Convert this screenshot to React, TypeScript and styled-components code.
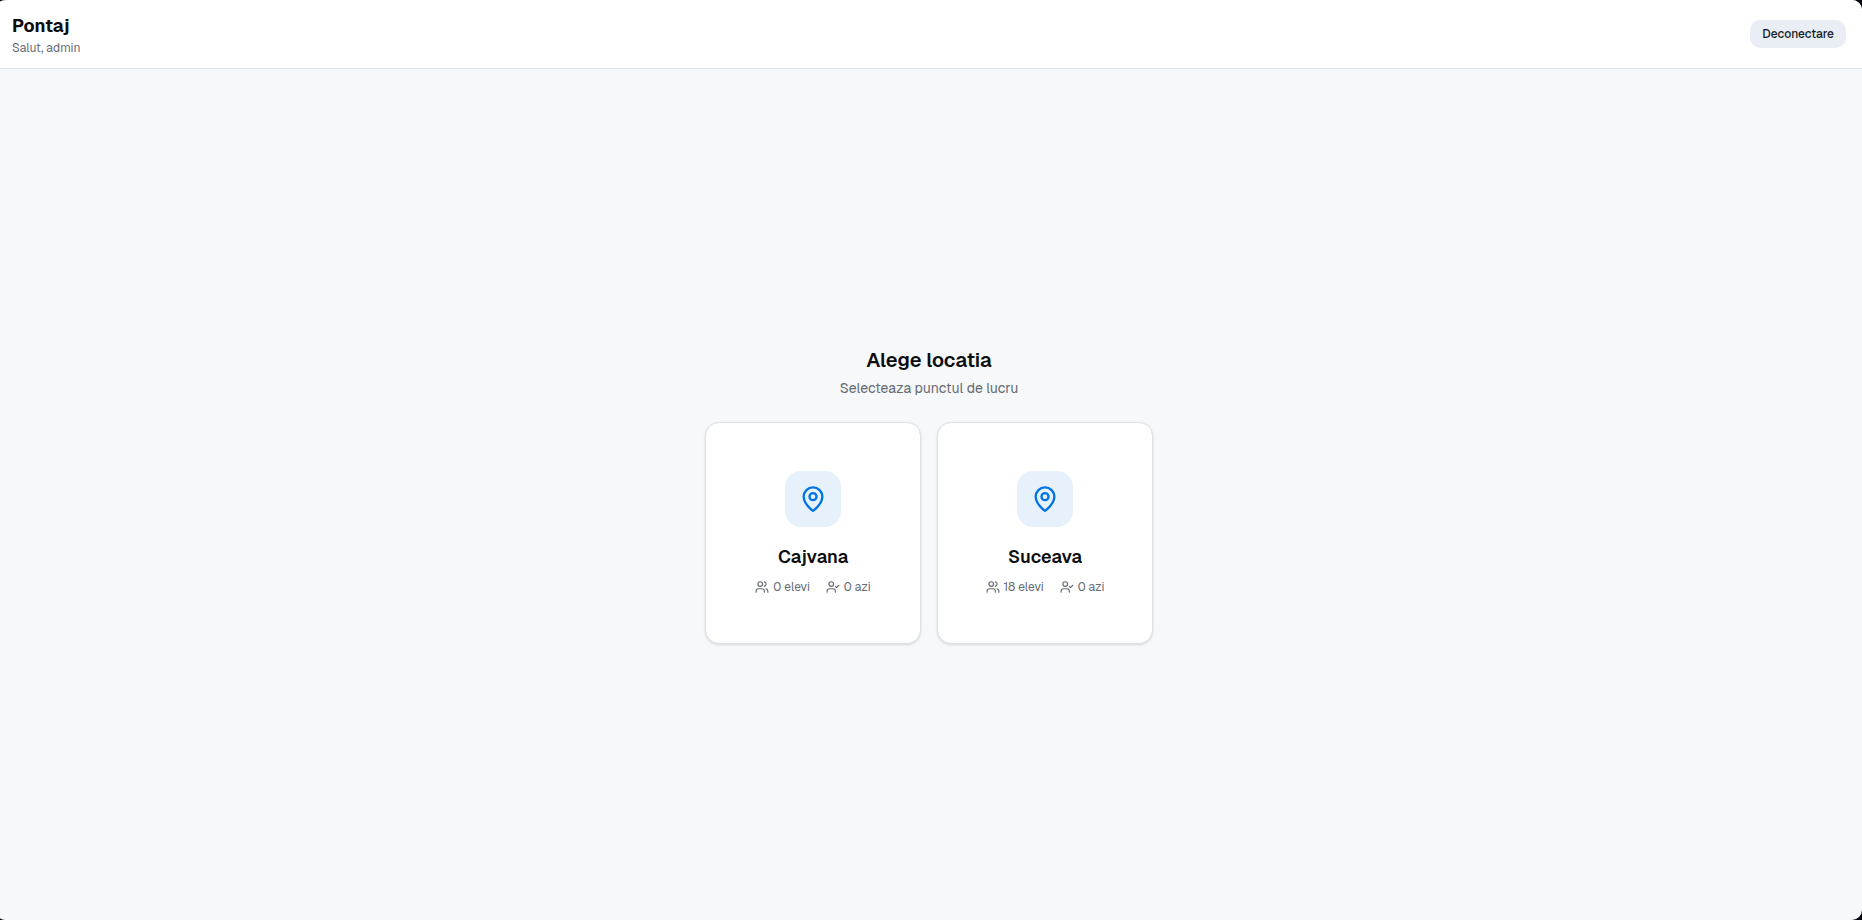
import React from "react";
import styled, { createGlobalStyle } from "styled-components";
import { MapPin, UserCheck, Users } from "lucide-react";

const GlobalStyle = createGlobalStyle`
  *, *::before, *::after { box-sizing: border-box; }
  html { background: #05060f; }
  body {
    margin: 0;
    font-family: Geist, Inter, "Liberation Sans", sans-serif;
    color: #0b0d10;
  }
  h1, h2, h3, p { margin: 0; }
`;

const Page = styled.div`
  min-height: 100vh;
  display: flex;
  flex-direction: column;
  background: #f7f8fa;
  border-radius: 10px 10px 10px 8px / 2px 10px 10px 2px;
`;

const Header = styled.header`
  display: flex;
  align-items: center;
  justify-content: space-between;
  padding: 12px 16px 12px 12px;
  background: #ffffff;
  border-bottom: 1px solid #dce1e8;
  border-radius: 10px 10px 0 0 / 2px 10px 0 0;
`;

const Brand = styled.h1`
  font-size: 18px;
  line-height: 28px;
  font-weight: 700;
`;

const Muted = styled.p<{ $size: number; $line: number }>`
  font-size: ${(p) => p.$size}px;
  line-height: ${(p) => p.$line}px;
  color: #646b73;
`;

const LogoutButton = styled.button`
  height: 28px;
  padding: 0 12px;
  border: 0;
  border-radius: 10px;
  background: #e9eef5;
  color: #141c28;
  font: 500 12px/16px Geist, Inter, "Liberation Sans", sans-serif;
  cursor: pointer;
`;

const Main = styled.main`
  flex: 1;
  display: flex;
  flex-direction: column;
  align-items: center;
  justify-content: center;
  padding: 16px 16px 16px 12px;
`;

const Intro = styled.div`
  display: flex;
  flex-direction: column;
  gap: 4px;
  margin-bottom: 24px;
  text-align: center;
`;

const Heading = styled.h2`
  font-size: 20px;
  line-height: 28px;
  font-weight: 600;
`;

const Locations = styled.div`
  display: grid;
  grid-template-columns: 1fr 1fr;
  gap: 16px;
  width: 100%;
  max-width: 448px;
`;

const LocationCard = styled.button`
  display: flex;
  flex-direction: column;
  align-items: center;
  padding: 48px 16px;
  border: 1px solid #dce1e6;
  border-radius: 14px;
  background: #ffffff;
  box-shadow: 0 1px 3px rgba(0, 0, 0, 0.1), 0 1px 2px -1px rgba(0, 0, 0, 0.1);
  color: inherit;
  font-family: inherit;
  cursor: pointer;
`;

const PinTile = styled.span`
  display: grid;
  place-items: center;
  width: 56px;
  height: 56px;
  margin-bottom: 16px;
  border-radius: 16px;
  background: #e6f1fc;
  color: #0073e6;
`;

const LocationName = styled.span`
  margin-bottom: 8px;
  font-size: 18px;
  line-height: 28px;
  font-weight: 600;
`;

const Stats = styled.span`
  display: flex;
  gap: 16px;
  font-size: 12px;
  line-height: 16px;
  color: #646b73;
`;

const Stat = styled.span`
  display: flex;
  align-items: center;
  gap: 4px;
`;

const locations = [
  { name: "Cajvana", students: 0, today: 0 },
  { name: "Suceava", students: 18, today: 0 },
];

export default function App() {
  return (
    <Page>
      <GlobalStyle />
      <Header>
        <div>
          <Brand>Pontaj</Brand>
          <Muted $size={12} $line={16}>Salut, admin</Muted>
        </div>
        <LogoutButton type="button">Deconectare</LogoutButton>
      </Header>
      <Main>
        <Intro>
          <Heading>Alege locatia</Heading>
          <Muted $size={14} $line={20}>Selecteaza punctul de lucru</Muted>
        </Intro>
        <Locations>
          {locations.map((l) => (
            <LocationCard type="button" key={l.name}>
              <PinTile><MapPin size={28} /></PinTile>
              <LocationName>{l.name}</LocationName>
              <Stats>
                <Stat><Users size={14} />{l.students} elevi</Stat>
                <Stat><UserCheck size={14} />{l.today} azi</Stat>
              </Stats>
            </LocationCard>
          ))}
        </Locations>
      </Main>
    </Page>
  );
}
